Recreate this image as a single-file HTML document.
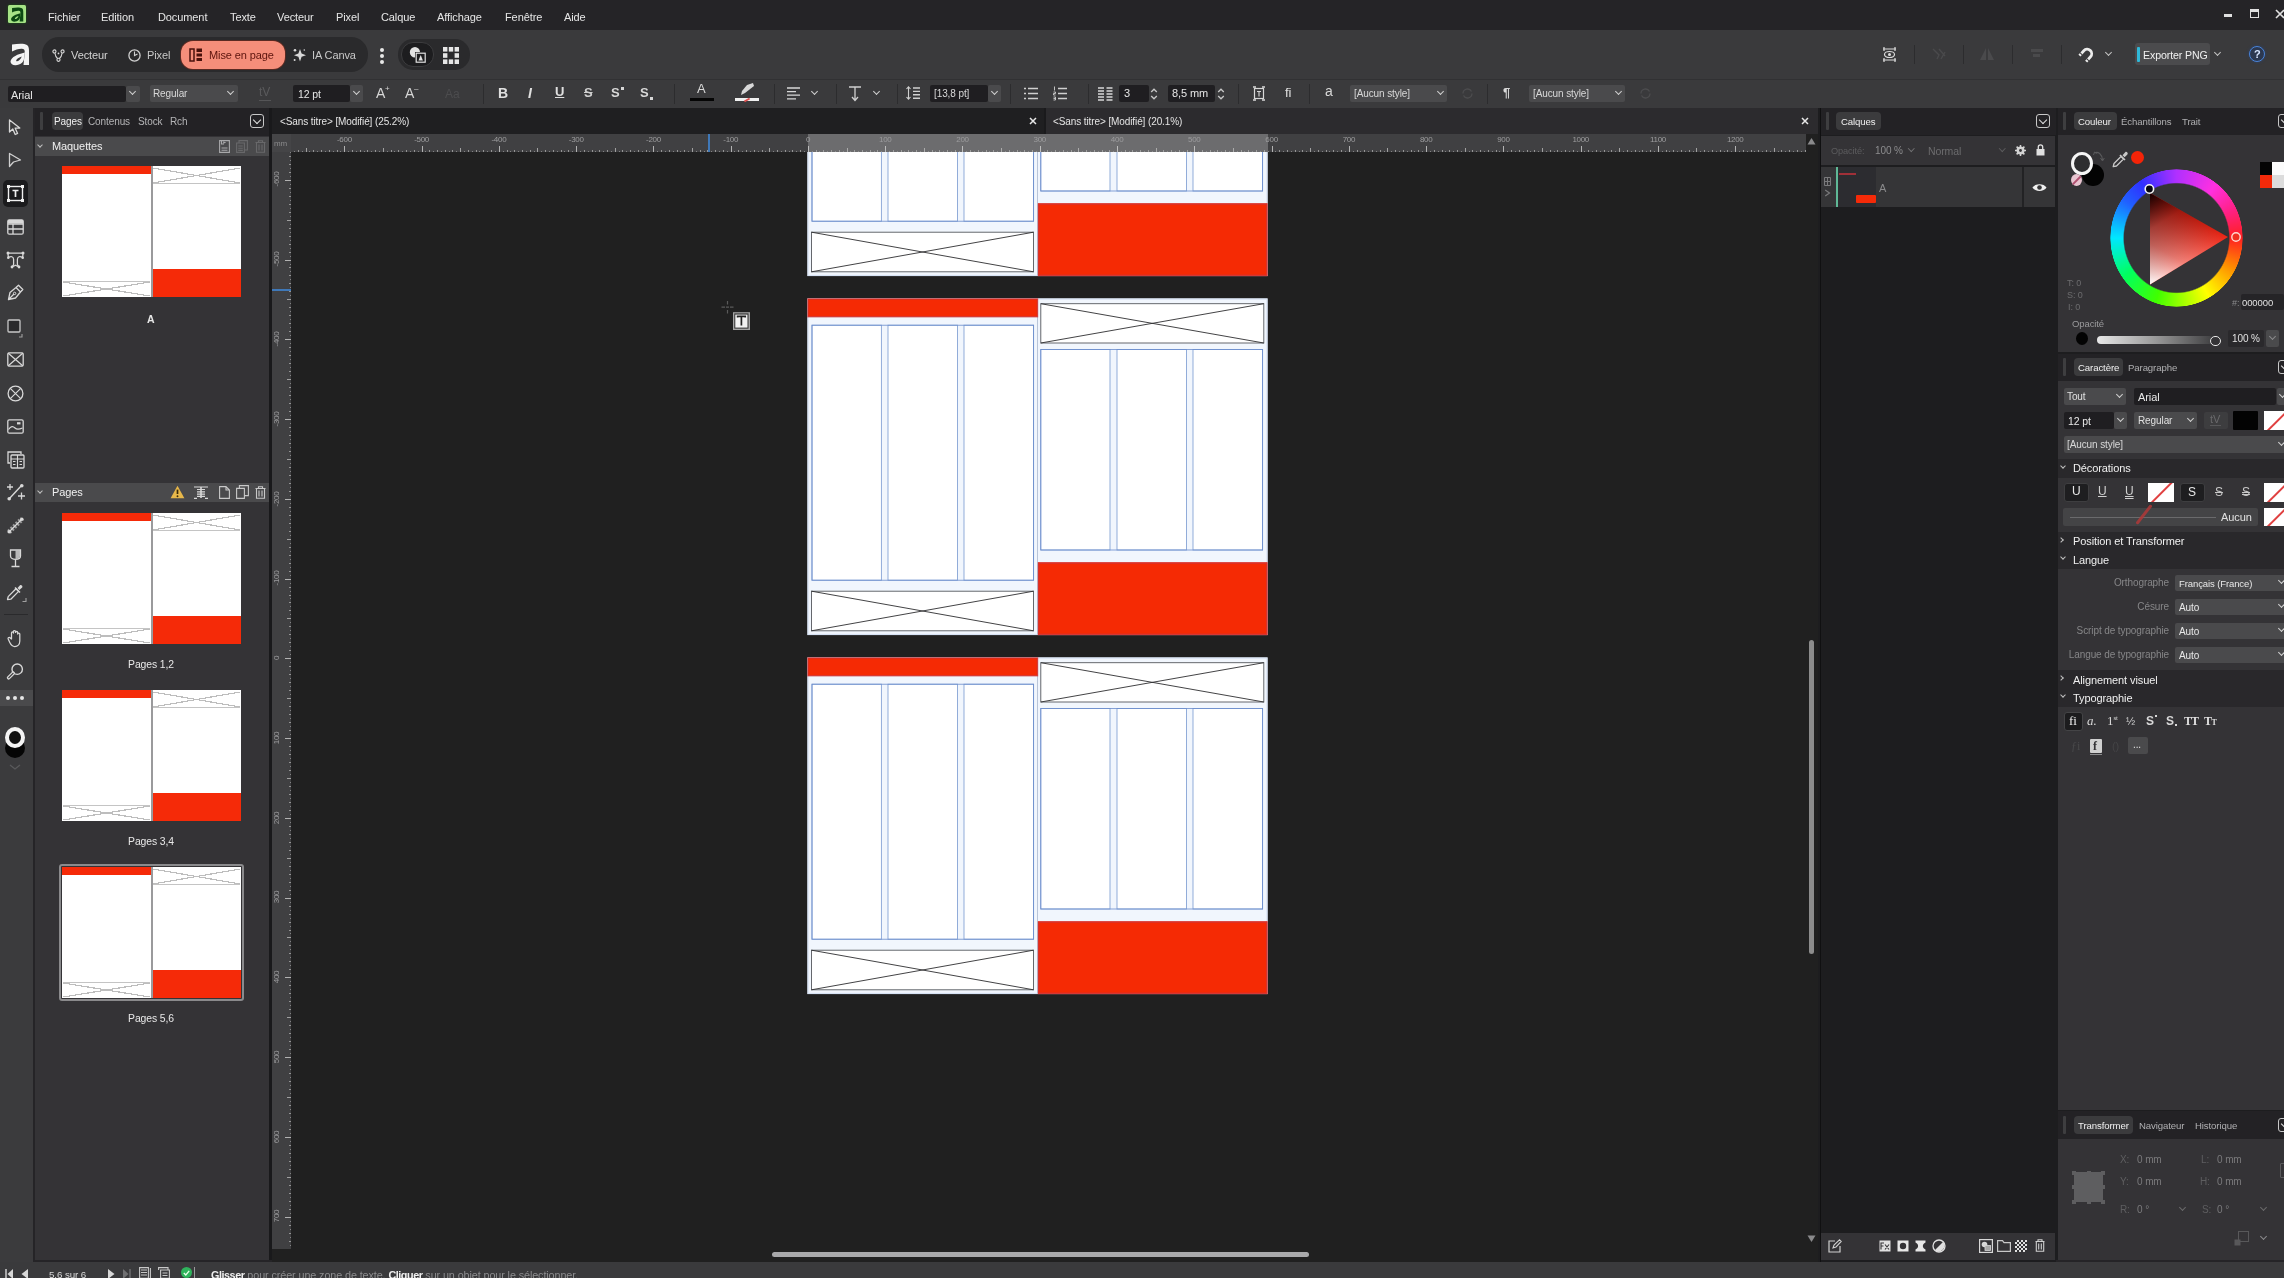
<!DOCTYPE html>
<html lang="fr">
<head>
<meta charset="utf-8">
<title>Sans titre</title>
<style>
*{box-sizing:border-box;margin:0;padding:0}
html,body{width:2284px;height:1278px;overflow:hidden;background:#3a3a3c}
body{opacity:.999;font-family:"Liberation Sans",sans-serif;font-size:11px;color:#e6e6e6;position:relative;letter-spacing:-0.1px}
.a{position:absolute}
.t{position:absolute;white-space:nowrap;line-height:14px;height:14px}
.dim{color:#8a8a8c}
.b{font-weight:bold}
svg{position:absolute;overflow:visible}
.fld{position:absolute;background:#1f1e21;border-radius:2px}
.dd{position:absolute;background:#4a4a4c;border-radius:2px}
.sep{position:absolute;width:1px;background:#2c2c2e}
.pill{position:absolute;background:#3b3b3d;border-radius:4px}
.hdr{position:absolute;background:#232225}
.sec{position:absolute;background:#4a4a4c}
.body{position:absolute;background:#343336}
.chev{position:absolute;width:5px;height:5px;border-right:1.4px solid #d0d0d0;border-bottom:1.4px solid #d0d0d0;transform:rotate(45deg)}
.chevr{position:absolute;width:5px;height:5px;border-right:1.4px solid #d0d0d0;border-bottom:1.4px solid #d0d0d0;transform:rotate(-45deg)}
.cbox{position:absolute;width:14px;height:14px;border:1.3px solid #c8c8c8;border-radius:3px}
.cbox:after{content:"";position:absolute;left:3px;top:1.5px;width:5px;height:5px;border-right:1.5px solid #e0e0e0;border-bottom:1.5px solid #e0e0e0;transform:rotate(45deg)}
.grip{position:absolute;width:3px;height:18px;background:#3e3e40;border-radius:1px}
.sw{position:absolute;background:#fff;overflow:hidden}
.sw:after{content:"";position:absolute;left:-20%;top:46%;width:140%;height:1.5px;background:#e04040;transform:rotate(-45deg)}
.thumb{position:absolute;width:179px;height:131px;background:#fff}
.thumb i{position:absolute;display:block}
.thumb .r1{left:0;top:0;width:89px;height:8px;background:#f52a08}
.thumb .r2{left:90px;top:103px;width:89px;height:28px;background:#f52a08}
.thumb .sp{left:89px;top:0;width:1.5px;height:131px;background:#9a9a9c}
.thumb .p1{left:1px;top:115px;width:87px;height:15px;border-top:1px solid #c4c4c4;background:linear-gradient(to top right,transparent calc(50% - .6px),#bdbdbd calc(50% - .6px),#bdbdbd calc(50% + .6px),transparent calc(50% + .6px)),linear-gradient(to bottom right,transparent calc(50% - .6px),#bdbdbd calc(50% - .6px),#bdbdbd calc(50% + .6px),transparent calc(50% + .6px))}
.thumb .p2{left:91px;top:2px;width:87px;height:16px;border-bottom:1px solid #c4c4c4;background:linear-gradient(to top right,transparent calc(50% - .6px),#bdbdbd calc(50% - .6px),#bdbdbd calc(50% + .6px),transparent calc(50% + .6px)),linear-gradient(to bottom right,transparent calc(50% - .6px),#bdbdbd calc(50% - .6px),#bdbdbd calc(50% + .6px),transparent calc(50% + .6px))}
</style>
</head>
<body>
<!-- ===== MENU BAR ===== -->
<div class="a" id="menubar" style="left:0;top:0;width:2284px;height:30px;background:#252427"></div>
<!-- ===== TOOLBAR ===== -->
<div class="a" id="toolbar" style="left:0;top:30px;width:2284px;height:49px;background:#3a3a3c"></div>
<!-- ===== CONTEXT BAR ===== -->
<div class="a" id="ctxbar" style="left:0;top:79px;width:2284px;height:29px;background:#3a3a3c"></div>
<!-- menu -->
<div class="a" style="left:8px;top:5px;width:18px;height:18px;background:#a6e386;border-radius:1.5px;box-shadow:0 0 3px #1c5a14"></div>
<svg style="left:10px;top:6.5px" width="14" height="15.5" viewBox="0 0 21 23.5"><path d="M3 1.5 C9 0.5 15 0 18 2 C20 3.5 20 6 20 9 L20 22 L14.5 22 L15.5 12 C16 8 16 6 13 5.8 C10 5.6 6 7 3 8.5 Z" fill="#0c4a12"/><path d="M15.8 9.5 C9 11 2 14 1.5 18.5 C1.5 22 6 23 10 21.5 C12.5 20.5 14 19 14.8 17 Z M12.8 13.5 C9.5 14.5 7 16.5 7.2 18 C8 19 11.5 17.5 12.8 13.5 Z" fill="#0c4a12" fill-rule="evenodd"/></svg>
<div class="t" style="left:48px;top:10px">Fichier</div>
<div class="t" style="left:101px;top:10px">Edition</div>
<div class="t" style="left:158px;top:10px">Document</div>
<div class="t" style="left:230px;top:10px">Texte</div>
<div class="t" style="left:277px;top:10px">Vecteur</div>
<div class="t" style="left:336px;top:10px">Pixel</div>
<div class="t" style="left:381px;top:10px">Calque</div>
<div class="t" style="left:437px;top:10px">Affichage</div>
<div class="t" style="left:505px;top:10px">Fenêtre</div>
<div class="t" style="left:564px;top:10px">Aide</div>
<!-- window controls -->
<div class="a" style="left:2224px;top:14px;width:8px;height:3px;background:#e0e0e0"></div>
<div class="a" style="left:2250px;top:9px;width:9px;height:9px;border:1.5px solid #e0e0e0;border-top-width:3px"></div>
<svg style="left:2275px;top:9px" width="10" height="10"><path d="M1 1 L9 9 M9 1 L1 9" stroke="#e0e0e0" stroke-width="1.6" fill="none"/></svg>

<!-- toolbar -->
<svg style="left:9px;top:43px" width="21" height="23.5" viewBox="0 0 21 23.5"><path d="M3 1.5 C9 0.5 15 0 18 2 C20 3.5 20 6 20 9 L20 22 L14.5 22 L15.5 12 C16 8 16 6 13 5.8 C10 5.6 6 7 3 8.5 Z" fill="#f4f4f4"/><path d="M15.8 9.5 C9 11 2 14 1.5 18.5 C1.5 22 6 23 10 21.5 C12.5 20.5 14 19 14.8 17 Z M12.8 13.5 C9.5 14.5 7 16.5 7.2 18 C8 19 11.5 17.5 12.8 13.5 Z" fill="#f4f4f4" fill-rule="evenodd"/></svg>
<div class="a" style="left:42px;top:37px;width:326px;height:35px;background:#2a2a2c;border-radius:17px"></div>
<!-- Vecteur -->
<svg style="left:52px;top:49px" width="13" height="13.8" viewBox="0 0 15 16"><g fill="none" stroke="#d8d8d8" stroke-width="1.3"><circle cx="2.8" cy="2.8" r="1.8"/><circle cx="12.2" cy="2.8" r="1.8"/><circle cx="7.5" cy="12.6" r="1.8"/><path d="M3.3 4.6 C3.8 8 5 10 6.5 11 M11.7 4.6 C11.2 8 10 10 8.5 11"/></g><circle cx="7.5" cy="5.2" r="1" fill="#d8d8d8"/></svg>
<div class="t" style="left:71px;top:48px;color:#d4d4d4">Vecteur</div>
<!-- Pixel -->
<svg style="left:127px;top:48px" width="15" height="15" viewBox="0 0 15 15"><circle cx="7.5" cy="7.5" r="5.6" fill="none" stroke="#d0d0d0" stroke-width="1.3"/><path d="M7.5 3.5 L7.5 7.5 L10.5 6" fill="none" stroke="#d0d0d0" stroke-width="1.1"/></svg>
<div class="t" style="left:147px;top:48px;color:#c8c8c8">Pixel</div>
<!-- Mise en page (active) -->
<div class="a" style="left:181px;top:41px;width:104px;height:28px;background:#f58e7a;border-radius:12px;box-shadow:0 0 0 1px #5a2a22"></div>
<svg style="left:189px;top:48px" width="14" height="14" viewBox="0 0 14 14"><rect x="1" y="1" width="4" height="12" fill="none" stroke="#4a120c" stroke-width="1.5"/><rect x="7.5" y="0.5" width="5.5" height="3.5" fill="#4a120c"/><rect x="7.5" y="5.5" width="5.5" height="3" fill="#4a120c"/><rect x="7.5" y="10" width="5.5" height="3" fill="#4a120c"/></svg>
<div class="t" style="left:209px;top:48px;color:#5c140d">Mise en page</div>
<!-- IA Canva -->
<svg style="left:292px;top:47px" width="15" height="16" viewBox="0 0 15 16"><path d="M8 2 L9.6 6.6 L14 8.2 L9.6 9.8 L8 14.4 L6.4 9.8 L2 8.2 L6.4 6.6 Z" fill="#d8d8d8"/><circle cx="3" cy="3.2" r="1.3" fill="#d8d8d8"/><circle cx="2.6" cy="13" r="1" fill="#d8d8d8"/><circle cx="12.3" cy="3" r="0.8" fill="#d8d8d8"/></svg>
<div class="t" style="left:312px;top:48px;color:#c8c8c8">IA Canva</div>
<!-- dots -->
<div class="a" style="left:380px;top:48px;width:4px;height:4px;border-radius:50%;background:#e8e8e8"></div>
<div class="a" style="left:380px;top:54px;width:4px;height:4px;border-radius:50%;background:#e8e8e8"></div>
<div class="a" style="left:380px;top:60px;width:4px;height:4px;border-radius:50%;background:#e8e8e8"></div>
<!-- second pill -->
<div class="a" style="left:398px;top:39px;width:72px;height:31px;background:#2a2a2c;border-radius:15px"></div>
<div class="a" style="left:401px;top:42px;width:33px;height:25px;background:#1d1d1f;border-radius:12px;border:1px solid #3c3c3e"></div>
<svg style="left:409px;top:46px" width="18" height="18" viewBox="0 0 18 18"><path d="M6 1 A5.2 5.2 0 1 0 6 11.4 L6 6 L11 6 A5.2 5.2 0 0 0 6 1Z" fill="#e2e2e2"/><rect x="7.2" y="7.2" width="9" height="9" fill="#1d1d1f" stroke="#e2e2e2" stroke-width="1.2"/><path d="M9.5 14.5 L11.7 9 L13.9 14.5 Z" fill="#e2e2e2"/></svg>
<svg style="left:443px;top:47px" width="16" height="17" viewBox="0 0 16 17"><g fill="#e6e6e6"><rect x="0" y="0" width="4.4" height="4.6"/><rect x="5.8" y="0" width="4.4" height="4.6"/><rect x="11.6" y="0" width="4.4" height="4.6"/><rect x="0" y="6.2" width="4.4" height="4.6"/><rect x="11.6" y="6.2" width="4.4" height="4.6"/><rect x="0" y="12.4" width="4.4" height="4.6"/><rect x="5.8" y="12.4" width="4.4" height="4.6"/><rect x="11.6" y="12.4" width="4.4" height="4.6"/></g></svg>
<!-- right side toolbar -->
<svg style="left:1881px;top:46px" width="17" height="17" viewBox="0 0 17 17"><g fill="none" stroke="#dcdcdc" stroke-width="1.2"><path d="M2 3 H15 M2 14 H15 M3 1 V5 M14 1 V5 M3 12 V16 M14 12 V16"/><ellipse cx="8.5" cy="8.5" rx="5" ry="3"/></g><circle cx="8.5" cy="8.5" r="1.5" fill="#dcdcdc"/></svg>
<div class="sep" style="left:1914px;top:45px;height:19px;background:#2c2c2e"></div>
<svg style="left:1931px;top:47px" width="16" height="14" viewBox="0 0 16 14"><path d="M2 2 L8 8 L6 12 M8 2 L14 9 M10 12 L14 5" stroke="#4a4a4c" stroke-width="1.4" fill="none"/></svg>
<div class="sep" style="left:1963px;top:45px;height:19px;background:#2c2c2e"></div>
<svg style="left:1979px;top:47px" width="16" height="14" viewBox="0 0 16 14"><path d="M7 1 L7 13 L1 13 Z M9 1 L9 13 L15 13 Z" fill="#4a4a4c"/></svg>
<div class="sep" style="left:2012px;top:45px;height:19px;background:#2c2c2e"></div>
<svg style="left:2030px;top:49px" width="14" height="10" viewBox="0 0 14 10"><rect x="1" y="0" width="12" height="3" fill="#4a4a4c"/><rect x="3" y="5" width="7" height="3" fill="#4a4a4c"/></svg>
<div class="sep" style="left:2061px;top:45px;height:19px;background:#2c2c2e"></div>
<svg style="left:2078px;top:46px" width="17" height="17" viewBox="0 0 17 17"><g transform="rotate(42 8.5 8.5)"><path d="M4 14 V7.5 A4.5 4.5 0 0 1 13 7.5 V14" fill="none" stroke="#ececec" stroke-width="2.8"/><path d="M2.4 11.6 H5.6 M11.4 11.6 H14.6" stroke="#3a3a3c" stroke-width="1"/></g></svg>
<div class="chev" style="left:2106px;top:50px;border-color:#c4c4c4"></div>
<div class="a" style="left:2135px;top:43px;width:75px;height:22px;background:#4b4b4d;border-radius:3px"></div>
<div class="a" style="left:2137px;top:47px;width:3px;height:15px;background:#2fb8d8;border-radius:1px"></div>
<div class="t" style="left:2143px;top:48px;font-size:10.6px;color:#f0f0f0">Exporter PNG</div>
<div class="chev" style="left:2214.5px;top:50px;border-color:#c4c4c4"></div>
<div class="a" style="left:2249px;top:46px;width:16px;height:16px;border:1.6px solid #4a84d8;border-radius:50%;background:#2c3850;box-shadow:0 0 3px #2c4470"></div>
<div class="t b" style="left:2254px;top:47px;font-size:11px;color:#d8e6ff">?</div>

<!-- context bar -->
<div class="a" style="left:0;top:79px;width:2284px;height:1px;background:#313133"></div>
<div class="fld" style="left:8px;top:86px;width:118px;height:16px"></div>
<div class="t" style="left:11px;top:88px">Arial</div>
<div class="dd" style="left:126px;top:86px;width:14px;height:16px"></div><div class="chev" style="left:130px;top:89px"></div>
<div class="dd" style="left:150px;top:85px;width:88px;height:17px"></div>
<div class="t" style="left:153px;top:87px;font-size:10px;color:#d8d8d8">Regular</div><div class="chev" style="left:228px;top:89px"></div>
<div class="t dim" style="left:259px;top:85px;color:#5a5a5c;font-size:12px">tV</div>
<div class="a" style="left:259px;top:100px;width:12px;height:1px;background:#555557"></div>
<div class="fld" style="left:293px;top:85px;width:57px;height:17px"></div>
<div class="t" style="left:298px;top:87px;font-size:10.5px">12 pt</div>
<div class="dd" style="left:350px;top:85px;width:13px;height:17px"></div><div class="chev" style="left:353.5px;top:89px"></div>
<div class="t" style="left:376px;top:86px;font-size:14px;color:#d6d6d6">A</div><div class="t" style="left:385px;top:82px;font-size:8px;color:#d6d6d6">+</div>
<div class="t" style="left:405px;top:86px;font-size:14px;color:#d6d6d6">A</div><div class="t" style="left:414px;top:82px;font-size:8px;color:#d6d6d6">–</div>
<div class="t" style="left:445px;top:87px;font-size:12px;color:#4c4c4e">Aa</div>
<div class="sep" style="left:483px;top:84px;height:20px"></div>
<div class="t b" style="left:498px;top:86px;font-size:14px;color:#e0e0e0">B</div>
<div class="t b" style="left:528px;top:86px;font-size:14px;color:#e0e0e0;font-style:italic">I</div>
<div class="t b" style="left:555px;top:85px;font-size:13px;color:#e0e0e0;text-decoration:underline">U</div>
<div class="t b" style="left:584px;top:86px;font-size:13px;color:#d0d0d0;text-decoration:line-through">S</div>
<div class="t b" style="left:611px;top:86px;font-size:13px;color:#d8d8d8">S</div><div class="a" style="left:621px;top:87px;width:2.5px;height:2.5px;background:#d8d8d8"></div>
<div class="t b" style="left:640px;top:86px;font-size:13px;color:#d8d8d8">S</div><div class="a" style="left:650px;top:97px;width:2.5px;height:2.5px;background:#d8d8d8"></div>
<div class="sep" style="left:674px;top:84px;height:20px"></div>
<div class="t" style="left:697px;top:82px;font-size:13px;color:#d8d8d8">A</div>
<div class="a" style="left:690px;top:98px;width:24px;height:3px;background:#050505"></div>
<svg style="left:738px;top:83px" width="18" height="13" viewBox="0 0 18 13"><path d="M9 2 L15 0 L16 3 L7 10 L3 12 L4 8 Z" fill="#d8d8d8"/></svg>
<div class="a" style="left:735px;top:98px;width:24px;height:3px;background:#f0f0f0"></div>
<div class="a" style="left:744px;top:98.5px;width:6px;height:2px;background:#e05050;transform:rotate(-30deg)"></div>
<div class="sep" style="left:774px;top:84px;height:20px"></div>
<!-- align -->
<svg style="left:787px;top:87px" width="15" height="13" viewBox="0 0 15 13"><path d="M0 1 H13 M0 4.6 H9 M0 8.2 H13 M0 11.8 H9" stroke="#d8d8d8" stroke-width="1.3"/></svg>
<div class="chev" style="left:812px;top:89px"></div>
<div class="sep" style="left:836px;top:84px;height:20px"></div>
<svg style="left:848px;top:86px" width="14" height="16" viewBox="0 0 14 16"><path d="M1 1 H13 M7 1 V14 M4 11 L7 14.5 L10 11" stroke="#d0d0d0" stroke-width="1.3" fill="none"/></svg>
<div class="chev" style="left:874px;top:89px"></div>
<div class="sep" style="left:897px;top:84px;height:20px"></div>
<svg style="left:906px;top:86px" width="14" height="14" viewBox="0 0 14 14"><path d="M2.5 1 V13 M0.5 3 L2.5 0.8 L4.5 3 M0.5 11 L2.5 13.2 L4.5 11" stroke="#d0d0d0" stroke-width="1.1" fill="none"/><path d="M7 2 H14 M7 5.4 H14 M7 8.8 H14 M7 12.2 H14" stroke="#d0d0d0" stroke-width="1.4"/></svg>
<div class="fld" style="left:930px;top:85px;width:58px;height:17px"></div>
<div class="t" style="left:934px;top:87px;font-size:10px;color:#d8d8d8">[13,8 pt]</div>
<div class="dd" style="left:988px;top:85px;width:13px;height:17px"></div><div class="chev" style="left:991.5px;top:89px"></div>
<div class="sep" style="left:1010px;top:84px;height:20px"></div>
<svg style="left:1024px;top:87px" width="14" height="13" viewBox="0 0 14 13"><path d="M4 1.5 H14 M4 6.5 H14 M4 11.5 H14" stroke="#d0d0d0" stroke-width="1.3"/><path d="M0 1.5 H2 M0 6.5 H2 M0 11.5 H2" stroke="#d0d0d0" stroke-width="1.6"/></svg>
<svg style="left:1053px;top:86px" width="14" height="15" viewBox="0 0 14 15"><path d="M5 2.5 H14 M5 7.5 H14 M5 12.5 H14" stroke="#d0d0d0" stroke-width="1.3"/><path d="M1.5 0.5 V4.5 M0.5 6 H2.5 V7.5 H0.5 V9 H2.5 M0.5 11 H2.5 V14 H0.5 M0.5 12.5 H2.5" stroke="#d0d0d0" stroke-width="0.9" fill="none"/></svg>
<div class="sep" style="left:1088px;top:84px;height:20px"></div>
<svg style="left:1098px;top:87px" width="15" height="14" viewBox="0 0 15 14"><path d="M0 1 H6 M0 4 H6 M0 7 H6 M0 10 H6 M0 13 H6 M8.5 1 H14.5 M8.5 4 H14.5 M8.5 7 H14.5 M8.5 10 H14.5 M8.5 13 H14.5" stroke="#d8d8d8" stroke-width="1.3"/></svg>
<div class="fld" style="left:1119px;top:85px;width:30px;height:17px"></div>
<div class="t" style="left:1124px;top:86px">3</div>
<svg style="left:1150px;top:87px" width="8" height="14" viewBox="0 0 8 14"><path d="M1.2 5 L4 2.2 L6.8 5 M1.2 9 L4 11.8 L6.8 9" stroke="#c8c8c8" stroke-width="1.3" fill="none"/></svg>
<div class="fld" style="left:1168px;top:85px;width:47px;height:17px"></div>
<div class="t" style="left:1172px;top:86px">8,5 mm</div>
<svg style="left:1217px;top:87px" width="8" height="14" viewBox="0 0 8 14"><path d="M1.2 5 L4 2.2 L6.8 5 M1.2 9 L4 11.8 L6.8 9" stroke="#c8c8c8" stroke-width="1.3" fill="none"/></svg>
<div class="sep" style="left:1238px;top:84px;height:20px"></div>
<svg style="left:1252px;top:86px" width="14" height="15" viewBox="0 0 14 15"><rect x="2.5" y="2.5" width="9" height="10" fill="none" stroke="#d8d8d8" stroke-width="1.2"/><path d="M1 1 H4 M10 1 H13 M1 14 H4 M10 14 H13" stroke="#d8d8d8" stroke-width="1.4"/><path d="M5 5.5 H9 M7 5.5 V10.5" stroke="#d8d8d8" stroke-width="1.1"/></svg>
<div class="t" style="left:1285px;top:86px;font-size:13px;color:#e0e0e0">fi</div>
<div class="sep" style="left:1309px;top:84px;height:20px"></div>
<div class="t" style="left:1325px;top:84px;font-size:14px;color:#d8d8d8">a</div>
<div class="dd" style="left:1350px;top:85px;width:97px;height:17px"></div>
<div class="t" style="left:1354px;top:87px;font-size:10px;color:#d8d8d8">[Aucun style]</div><div class="chev" style="left:1438px;top:89px"></div>
<svg style="left:1461px;top:87px" width="13" height="13" viewBox="0 0 13 13"><path d="M2 6.5 A4.5 4.5 0 0 1 10.5 4.5 M11 6.5 A4.5 4.5 0 0 1 2.5 8.5" stroke="#4c4c4e" stroke-width="1.3" fill="none"/></svg>
<div class="sep" style="left:1487px;top:84px;height:20px"></div>
<div class="t b" style="left:1503px;top:86px;font-size:13px;color:#d8d8d8">¶</div>
<div class="dd" style="left:1529px;top:85px;width:96px;height:17px"></div>
<div class="t" style="left:1533px;top:87px;font-size:10px;color:#d8d8d8">[Aucun style]</div><div class="chev" style="left:1616px;top:89px"></div>
<svg style="left:1639px;top:87px" width="13" height="13" viewBox="0 0 13 13"><path d="M2 6.5 A4.5 4.5 0 0 1 10.5 4.5 M11 6.5 A4.5 4.5 0 0 1 2.5 8.5" stroke="#4c4c4e" stroke-width="1.3" fill="none"/></svg>

<!-- ===== LEFT TOOL STRIP ===== -->
<div class="a" style="left:0;top:108px;width:33px;height:1154px;background:#3b3b3d"></div>
<div class="a" style="left:33px;top:108px;width:2px;height:1154px;background:#252427"></div>
<!-- move -->
<svg style="left:8px;top:119px" width="14" height="17" viewBox="0 0 14 17"><path d="M1.5 1 L1.5 13 L4.8 10 L7.2 15.5 L9.6 14.4 L7.2 9.2 L11.8 9 Z" fill="none" stroke="#d8d8d8" stroke-width="1.3" stroke-linejoin="round"/></svg>
<!-- node -->
<svg style="left:8px;top:152px" width="14" height="16" viewBox="0 0 14 16"><path d="M1.5 1.5 L12.5 8 L5.5 10 L1.5 14.5 Z" fill="none" stroke="#d0d0d0" stroke-width="1.3" stroke-linejoin="round"/></svg>
<!-- text frame (active) -->
<div class="a" style="left:3px;top:180px;width:25px;height:27px;background:#1b1b1d;border-radius:5px"></div>
<svg style="left:7px;top:185px" width="17" height="17" viewBox="0 0 17 17"><rect x="1.5" y="1.5" width="14" height="14" fill="none" stroke="#f0f0f0" stroke-width="1.4"/><g fill="#f0f0f0"><rect x="0" y="0" width="3" height="3"/><rect x="14" y="0" width="3" height="3"/><rect x="0" y="14" width="3" height="3"/><rect x="14" y="14" width="3" height="3"/></g><path d="M5.5 5.5 H11.5 M8.5 5.5 V12" stroke="#f0f0f0" stroke-width="1.7"/></svg>
<!-- table -->
<svg style="left:7px;top:219px" width="17" height="16" viewBox="0 0 17 16"><rect x="0.8" y="0.8" width="15.4" height="14.4" rx="1.5" fill="none" stroke="#d8d8d8" stroke-width="1.3"/><path d="M0.8 5 H16.2 M0.8 10 H16.2 M6 5 V15" stroke="#d8d8d8" stroke-width="1.3"/><rect x="1" y="1" width="15" height="3.5" fill="#d8d8d8"/></svg>
<!-- artistic text -->
<svg style="left:6px;top:251px" width="19" height="18" viewBox="0 0 19 18"><g fill="none" stroke="#d8d8d8" stroke-width="1.25" stroke-linejoin="round"><path d="M2 2 H17 M2 2 L2.3 6.5 M17 2 L16.7 6.5 M2.3 6.5 C5 5 7.6 5.4 7.6 8.5 V13.5 L6 16 M16.7 6.5 C14 5 11.4 5.4 11.4 8.5 V13.5 L13 16 M6 16 L9.5 14.2 L13 16"/></g><g fill="#d8d8d8"><circle cx="2" cy="2" r="1.5"/><circle cx="17" cy="2" r="1.5"/><circle cx="2.3" cy="6.7" r="1.3"/><circle cx="16.7" cy="6.7" r="1.3"/><circle cx="6" cy="16" r="1.4"/><circle cx="13" cy="16" r="1.4"/></g></svg>
<!-- pen -->
<svg style="left:7px;top:284px" width="17" height="17" viewBox="0 0 17 17"><path d="M1.5 15.5 L3 8.5 L9 3.5 L13.5 8 L8.5 14 Z M9 3.5 L11.5 1.2 L15.8 5.5 L13.5 8 M1.5 15.5 L7 10" fill="none" stroke="#d8d8d8" stroke-width="1.3" stroke-linejoin="round"/><circle cx="7.6" cy="9.4" r="1.2" fill="none" stroke="#d8d8d8" stroke-width="1"/></svg>
<!-- rectangle -->
<svg style="left:7px;top:319px" width="21" height="21" viewBox="0 0 21 21"><rect x="1" y="1" width="12" height="12" rx="1" fill="#2a2a2c" stroke="#c8c8c8" stroke-width="1.3"/><path d="M15 15 V18 H12" stroke="#a0a0a0" stroke-width="1.1" fill="none"/></svg>
<!-- picture frame rect -->
<svg style="left:7px;top:352px" width="17" height="15" viewBox="0 0 17 15"><rect x="0.8" y="0.8" width="15.4" height="13.4" rx="1.5" fill="none" stroke="#d8d8d8" stroke-width="1.3"/><path d="M1 1 L16 14 M16 1 L1 14" stroke="#d8d8d8" stroke-width="1.2"/></svg>
<!-- picture frame ellipse -->
<svg style="left:7px;top:385px" width="17" height="17" viewBox="0 0 17 17"><circle cx="8.5" cy="8.5" r="7.4" fill="none" stroke="#d8d8d8" stroke-width="1.3"/><path d="M3.3 3.3 L13.7 13.7 M13.7 3.3 L3.3 13.7" stroke="#d8d8d8" stroke-width="1.2"/></svg>
<!-- place image -->
<svg style="left:7px;top:419px" width="17" height="15" viewBox="0 0 17 15"><rect x="0.8" y="0.8" width="15.4" height="13.4" rx="1.5" fill="none" stroke="#d8d8d8" stroke-width="1.3"/><path d="M1.5 10.5 C4 7 6 7 8 9 C10 11 12 10.5 15.5 9" stroke="#d8d8d8" stroke-width="1.2" fill="none"/><rect x="10" y="3.2" width="3.5" height="2.2" fill="#d8d8d8"/></svg>
<!-- data merge -->
<svg style="left:7px;top:451px" width="18" height="18" viewBox="0 0 18 18"><path d="M3 12 H1 V1 H14 V3" stroke="#d8d8d8" stroke-width="1.3" fill="none"/><rect x="4" y="4" width="13" height="13" rx="1" fill="none" stroke="#d8d8d8" stroke-width="1.3"/><path d="M4 8 H17 M10.5 4 V17 M12.5 10.5 H15 M12.5 13.5 H15 M6 10.5 H8.5 M6 13.5 H8.5" stroke="#d8d8d8" stroke-width="1.1"/></svg>
<!-- crop/vector -->
<svg style="left:6px;top:483px" width="19" height="19" viewBox="0 0 19 19"><path d="M3 16 L16 2" stroke="#d8d8d8" stroke-width="1.4"/><circle cx="3.2" cy="15.8" r="1.8" fill="#d8d8d8"/><circle cx="15.8" cy="2.8" r="1.8" fill="#d8d8d8"/><path d="M1 4 H7 M4 1 V7 M12 13 H19 M15.5 9.5 V16.5" stroke="#d8d8d8" stroke-width="1.3"/></svg>
<!-- transparency -->
<svg style="left:6px;top:516px" width="19" height="19" viewBox="0 0 19 19"><path d="M3 16 L16 3" stroke="#bcbcbc" stroke-width="5" stroke-dasharray="2 1.6" opacity=".75"/><path d="M3 16 L16 3" stroke="#d8d8d8" stroke-width="1.3"/><circle cx="3.2" cy="15.8" r="1.8" fill="#d8d8d8"/><circle cx="15.8" cy="3.2" r="1.8" fill="#d8d8d8"/></svg>
<!-- glass -->
<svg style="left:8px;top:549px" width="15" height="19" viewBox="0 0 15 19"><path d="M2.5 1 H12.5 V7 C12.5 11.5 2.5 11.5 2.5 7 Z M7.5 10.5 V17 M3.5 17.5 H11.5" fill="none" stroke="#d8d8d8" stroke-width="1.3"/><path d="M7.5 1.5 H12 V7 C12 9 9.5 10 7.5 10 Z" fill="#d8d8d8" opacity=".8"/></svg>
<!-- eyedropper -->
<svg style="left:6px;top:583px" width="22" height="22" viewBox="0 0 22 22"><path d="M1.5 16.5 L2.2 13.6 L10 5.8 L12.6 8.4 L4.8 16.2 Z" fill="none" stroke="#d8d8d8" stroke-width="1.3" stroke-linejoin="round"/><path d="M9 4.5 L14 9.5" stroke="#d8d8d8" stroke-width="1.6"/><path d="M11.5 5 L14 2.2 C15 1.2 17.2 3.2 16.2 4.4 L13.4 7 Z" fill="#d8d8d8"/><path d="M20 15 V18.5 H16.5" stroke="#a0a0a0" stroke-width="1.1" fill="none"/></svg>
<div class="a" style="left:4px;top:614px;width:24px;height:1px;background:#2a2a2c"></div>
<!-- hand -->
<svg style="left:7px;top:629px" width="17" height="19" viewBox="0 0 17 19"><path d="M4.5 10 V4 C4.5 2.6 6.5 2.6 6.5 4 V2.6 C6.5 1.2 8.6 1.2 8.6 2.6 V3.4 C8.6 2 10.7 2 10.7 3.4 V5 C10.7 3.8 12.8 3.8 12.8 5 V12 C12.8 15.5 10.5 17.5 7.8 17.5 C5.5 17.5 4 16 2.8 13.5 L1.2 10 C0.6 8.6 2.6 7.8 3.4 9.2 Z" fill="none" stroke="#d8d8d8" stroke-width="1.25" stroke-linejoin="round"/></svg>
<!-- zoom -->
<svg style="left:6px;top:662px" width="19" height="19" viewBox="0 0 19 19"><circle cx="11.2" cy="7.2" r="5.2" fill="none" stroke="#d8d8d8" stroke-width="1.4"/><path d="M7.2 11.2 L2.6 15.8" stroke="#d8d8d8" stroke-width="3.6" stroke-linecap="round"/><path d="M7 11.4 L2.8 15.6" stroke="#3b3b3d" stroke-width="1.3" stroke-linecap="round"/></svg>
<!-- dots row -->
<div class="a" style="left:0;top:690px;width:33px;height:16px;background:#4a4a4c"></div>
<div class="a" style="left:6px;top:696px;width:4px;height:4px;border-radius:50%;background:#e6e6e6"></div>
<div class="a" style="left:13px;top:696px;width:4px;height:4px;border-radius:50%;background:#e6e6e6"></div>
<div class="a" style="left:20px;top:696px;width:4px;height:4px;border-radius:50%;background:#e6e6e6"></div>
<!-- colour rings -->
<div class="a" style="left:5px;top:738px;width:20px;height:20px;border-radius:50%;background:#050505"></div>
<div class="a" style="left:5px;top:727px;width:20px;height:21px;border-radius:50%;border:4px solid #f4f4f4;background:#111"></div>
<svg style="left:9px;top:764px" width="12" height="6" viewBox="0 0 12 6"><path d="M1 1 L6 5 L11 1" stroke="#5a5a5c" stroke-width="1.3" fill="none"/></svg>

<!-- ===== PAGES PANEL ===== -->
<div class="hdr" style="left:35px;top:108px;width:235px;height:28px"></div>
<div class="body" style="left:35px;top:136px;width:234px;height:1125px"></div>
<div class="a" style="left:269px;top:108px;width:3px;height:1154px;background:#19191b"></div>
<div class="a" style="left:35px;top:1260px;width:237px;height:2px;background:#252427"></div>
<div class="grip" style="left:40px;top:112px"></div>
<div class="pill" style="left:52px;top:112px;width:31px;height:18px"></div>
<div class="t" style="left:54px;top:115px;font-size:10px;color:#f0f0f0">Pages</div>
<div class="t" style="left:88px;top:115px;font-size:10px;color:#b4b4b6">Contenus</div>
<div class="t" style="left:138px;top:115px;font-size:10px;color:#b4b4b6">Stock</div>
<div class="t" style="left:170px;top:115px;font-size:10px;color:#b4b4b6">Rch</div>
<div class="cbox" style="left:250px;top:114px"></div>
<!-- Maquettes header -->
<div class="sec" style="left:35px;top:137px;width:234px;height:19px"></div>
<div class="chev" style="left:37.5px;top:142.5px;width:4px;height:4px;border-color:#c0c0c0"></div>
<div class="t" style="left:52px;top:139px;color:#f0f0f0">Maquettes</div>
<svg style="left:219px;top:140px" width="11" height="13" viewBox="0 0 11 13"><path d="M0.6 0.6 H10.4 V12.4 H0.6 Z M2.5 0.6 V4 H5 M2.5 8 H8.5 M2.5 10.3 H8.5" fill="none" stroke="#a8a8aa" stroke-width="1.1"/><path d="M4.2 1.2 L7.2 2.5 L4.2 3.8 Z" fill="#a8a8aa"/></svg>
<svg style="left:236px;top:140px" width="12" height="13" viewBox="0 0 12 13"><path d="M0.6 3 H8.4 V12.4 H0.6 Z M3 3 V0.6 H11.4 V10 H8.4 M2.2 6 H6.8 M2.2 8.2 H6.8 M2.2 10.4 H6.8" fill="none" stroke="#68686a" stroke-width="1.1"/></svg>
<svg style="left:255px;top:140px" width="11" height="13" viewBox="0 0 11 13"><path d="M0.5 2.5 H10.5 M3.5 2.5 V0.7 H7.5 V2.5 M1.5 2.5 V12.3 H9.5 V2.5 M4 4.6 V10.4 M7 4.6 V10.4" fill="none" stroke="#68686a" stroke-width="1.1"/></svg>
<!-- master thumb A -->
<div class="thumb" style="left:62px;top:166px"><i class="r1"></i><i class="r2"></i><i class="sp"></i><i class="p1"></i><i class="p2"></i></div>
<div class="t b" style="left:147px;top:312px;font-size:10.5px;color:#e8e8e8">A</div>
<!-- Pages header -->
<div class="sec" style="left:35px;top:483px;width:234px;height:19px"></div>
<div class="chev" style="left:37.5px;top:488.5px;width:4px;height:4px;border-color:#c0c0c0"></div>
<div class="t" style="left:52px;top:485px;color:#f0f0f0">Pages</div>
<svg style="left:170px;top:485px" width="15" height="14" viewBox="0 0 15 14"><path d="M7.5 0.8 L14.4 13.2 H0.6 Z" fill="#e8b84a"/><path d="M7.5 4.6 V9" stroke="#3a2a08" stroke-width="1.7"/><circle cx="7.5" cy="11.2" r="0.95" fill="#3a2a08"/></svg>
<svg style="left:194px;top:486px" width="14" height="13" viewBox="0 0 14 13"><path d="M0 1 H14 M3 3.5 H11 M3 5.8 H11 M3 8.1 H11 M3 10.4 H11 M0 12.4 H3 M11 12.4 H14" stroke="#d8d8d8" stroke-width="1.2"/><path d="M7 1 V12" stroke="#d8d8d8" stroke-width="1.6"/></svg>
<svg style="left:219px;top:486px" width="11" height="13" viewBox="0 0 11 13"><path d="M0.6 0.6 H7 L10.4 4 V12.4 H0.6 Z M7 0.6 V4 H10.4" fill="none" stroke="#c8c8c8" stroke-width="1.1"/></svg>
<svg style="left:236px;top:485px" width="13" height="14" viewBox="0 0 13 14"><path d="M0.6 3.4 H8.4 V13.4 H0.6 Z M3.4 3.4 V0.6 H12.4 V10.6 H8.4" fill="none" stroke="#c8c8c8" stroke-width="1.1"/></svg>
<svg style="left:255px;top:486px" width="11" height="13" viewBox="0 0 11 13"><path d="M0.5 2.5 H10.5 M3.5 2.5 V0.7 H7.5 V2.5 M1.5 2.5 V12.3 H9.5 V2.5 M4 4.6 V10.4 M7 4.6 V10.4" fill="none" stroke="#c8c8c8" stroke-width="1.1"/></svg>
<!-- page thumbs -->
<div class="thumb" style="left:62px;top:513px"><i class="r1"></i><i class="r2"></i><i class="sp"></i><i class="p1"></i><i class="p2"></i></div>
<div class="t" style="left:101px;top:658px;width:100px;text-align:center;font-size:10.4px;color:#e8e8e8">Pages 1,2</div>
<div class="thumb" style="left:62px;top:690px"><i class="r1"></i><i class="r2"></i><i class="sp"></i><i class="p1"></i><i class="p2"></i></div>
<div class="t" style="left:101px;top:835px;width:100px;text-align:center;font-size:10.4px;color:#e8e8e8">Pages 3,4</div>
<div class="a" style="left:59px;top:864px;width:185px;height:137px;border:2.5px solid #8a8a8c;border-radius:3px"></div>
<div class="thumb" style="left:62px;top:867px"><i class="r1"></i><i class="r2"></i><i class="sp"></i><i class="p1"></i><i class="p2"></i></div>
<div class="t" style="left:101px;top:1012px;width:100px;text-align:center;font-size:10.4px;color:#e8e8e8">Pages 5,6</div>

<!--CANVAS_START-->
<!-- ===== DOCUMENT TABS ===== -->
<div class="a" style="left:272px;top:108px;width:1546px;height:26px;background:#2c2b2e"></div>
<div class="a" style="left:272px;top:108px;width:772px;height:26px;background:#1f1f21"></div>
<div class="a" style="left:1044px;top:108px;width:2px;height:26px;background:#1a1a1c"></div>
<div class="t" style="left:280px;top:115px;font-size:10px;color:#e4e4e4">&lt;Sans titre&gt; [Modifié] (25.2%)</div>
<svg style="left:1029px;top:117px" width="8" height="8"><path d="M1 1 L7 7 M7 1 L1 7" stroke="#e8e8e8" stroke-width="1.5" fill="none"/></svg>
<div class="t" style="left:1053px;top:115px;font-size:10px;color:#e4e4e4">&lt;Sans titre&gt; [Modifié] (20.1%)</div>
<svg style="left:1801px;top:117px" width="8" height="8"><path d="M1 1 L7 7 M7 1 L1 7" stroke="#e8e8e8" stroke-width="1.5" fill="none"/></svg>
<!-- ===== CANVAS ===== -->
<div class="a" id="canvas" style="left:272px;top:134px;width:1546px;height:1128px;background:#202020;overflow:hidden">
<svg style="left:0;top:0" width="1546" height="1128" viewBox="272 134 1546 1128">
<defs><g id="spread">
<rect x="-0.5" y="-0.5" width="460" height="336.5" fill="#f1f6fd"/>
<rect x="0" y="0" width="459" height="335.5" fill="none" stroke="#d6e2f4" stroke-width="1.2"/>
<rect x="4" y="26.2" width="69.4" height="255" fill="#ffffff" stroke="#86a4d6" stroke-width="0.9"/>
<rect x="80" y="26.2" width="69.5" height="255" fill="#ffffff" stroke="#86a4d6" stroke-width="0.9"/>
<rect x="156" y="26.2" width="69.6" height="255" fill="#ffffff" stroke="#86a4d6" stroke-width="0.9"/>
<rect x="4" y="26.2" width="221.6" height="255" fill="none" stroke="#6a8ccc" stroke-width="0.8"/>
<rect x="232.8" y="50.5" width="69.2" height="200.5" fill="#ffffff" stroke="#86a4d6" stroke-width="0.9"/>
<rect x="309" y="50.5" width="69.5" height="200.5" fill="#ffffff" stroke="#86a4d6" stroke-width="0.9"/>
<rect x="385" y="50.5" width="69.6" height="200.5" fill="#ffffff" stroke="#86a4d6" stroke-width="0.9"/>
<rect x="232.8" y="50.5" width="221.8" height="200.5" fill="none" stroke="#6a8ccc" stroke-width="0.8"/>
<g stroke="#2e2e30" stroke-width="0.9" fill="#ffffff"><rect x="3.5" y="292.2" width="222" height="39.6" stroke="#55585e"/><path d="M3.5 292.2 L225.5 331.8 M225.5 292.2 L3.5 331.8" fill="none"/>
<rect x="232.8" y="4.7" width="223" height="39.3" stroke="#55585e"/><path d="M232.8 4.7 L455.8 44 M455.8 4.7 L232.8 44" fill="none"/></g>
<path d="M229.5 0 V335.5" stroke="#b8c4d8" stroke-width="1"/>
<rect x="0" y="0" width="229.5" height="17.7" fill="#f52a04"/><rect x="0" y="0" width="229.5" height="17.7" fill="none" stroke="#d03030" stroke-width="1.4" opacity=".8"/>
<rect x="230" y="263.4" width="229.3" height="72.4" fill="#f52a04"/><rect x="230.6" y="264" width="228.2" height="71.4" fill="none" stroke="#d23434" stroke-width="1.6" opacity=".85"/>
</g></defs>
<use href="#spread" x="808" y="-60"/>
<use href="#spread" x="808" y="299"/>
<use href="#spread" x="808" y="658"/>
</svg>
<svg style="left:449px;top:166px" width="32" height="34" viewBox="0 0 32 34"><path d="M6.5 1 V4.5 M6.5 10 V13.5 M0.5 7.2 H4 M9 7.2 H12.5 M5 7.2 H8" stroke="#5a5a5a" stroke-width="1.2" fill="none"/><rect x="12" y="12.2" width="17" height="17.8" fill="#a4a4a4"/><rect x="13.3" y="13.4" width="14.2" height="15.2" fill="#303030"/><rect x="14.3" y="14.6" width="12.2" height="13" fill="#f2f2f2"/><path d="M16.6 17.6 V16.4 H24.2 V17.6 M20.4 16.4 V25.4" stroke="#222" stroke-width="1.7" fill="none"/></svg>
<div class="a" style="left:0;top:0;width:1534px;height:18px;background:#404042;overflow:hidden">
<div class="a" style="left:536px;top:0;width:460px;height:18px;background:#6c6c6e"></div>
<div class="a" style="left:-4.9px;top:0;width:1700px;height:18px;opacity:.75;background:repeating-linear-gradient(90deg,#d8d8d8 0,#d8d8d8 1px,transparent 1px,transparent 77.27px) 0 11.5px/100% 6.5px no-repeat,repeating-linear-gradient(90deg,#c0c0c0 0,#c0c0c0 1px,transparent 1px,transparent 38.635px) 0 14px/100% 4px no-repeat,repeating-linear-gradient(90deg,#b0b0b0 0,#b0b0b0 1px,transparent 1px,transparent 7.727px) 0 15.5px/100% 2.5px no-repeat,repeating-linear-gradient(90deg,#9a9a9a 0,#9a9a9a 1px,transparent 1px,transparent 3.8635px) 0 16.7px/100% 1.3px no-repeat"></div>
<div class="t" style="left:57.4px;top:1px;width:30px;text-align:center;font-size:8px;line-height:10px;height:10px;color:#9c9c9e;letter-spacing:-0.3px">-600</div>
<div class="t" style="left:134.6px;top:1px;width:30px;text-align:center;font-size:8px;line-height:10px;height:10px;color:#9c9c9e;letter-spacing:-0.3px">-500</div>
<div class="t" style="left:211.9px;top:1px;width:30px;text-align:center;font-size:8px;line-height:10px;height:10px;color:#9c9c9e;letter-spacing:-0.3px">-400</div>
<div class="t" style="left:289.2px;top:1px;width:30px;text-align:center;font-size:8px;line-height:10px;height:10px;color:#9c9c9e;letter-spacing:-0.3px">-300</div>
<div class="t" style="left:366.5px;top:1px;width:30px;text-align:center;font-size:8px;line-height:10px;height:10px;color:#9c9c9e;letter-spacing:-0.3px">-200</div>
<div class="t" style="left:443.7px;top:1px;width:30px;text-align:center;font-size:8px;line-height:10px;height:10px;color:#9c9c9e;letter-spacing:-0.3px">-100</div>
<div class="t" style="left:521.0px;top:1px;width:30px;text-align:center;font-size:8px;line-height:10px;height:10px;color:#9c9c9e;letter-spacing:-0.3px">0</div>
<div class="t" style="left:598.3px;top:1px;width:30px;text-align:center;font-size:8px;line-height:10px;height:10px;color:#9c9c9e;letter-spacing:-0.3px">100</div>
<div class="t" style="left:675.5px;top:1px;width:30px;text-align:center;font-size:8px;line-height:10px;height:10px;color:#9c9c9e;letter-spacing:-0.3px">200</div>
<div class="t" style="left:752.8px;top:1px;width:30px;text-align:center;font-size:8px;line-height:10px;height:10px;color:#9c9c9e;letter-spacing:-0.3px">300</div>
<div class="t" style="left:830.1px;top:1px;width:30px;text-align:center;font-size:8px;line-height:10px;height:10px;color:#9c9c9e;letter-spacing:-0.3px">400</div>
<div class="t" style="left:907.3px;top:1px;width:30px;text-align:center;font-size:8px;line-height:10px;height:10px;color:#9c9c9e;letter-spacing:-0.3px">500</div>
<div class="t" style="left:984.6px;top:1px;width:30px;text-align:center;font-size:8px;line-height:10px;height:10px;color:#9c9c9e;letter-spacing:-0.3px">600</div>
<div class="t" style="left:1061.9px;top:1px;width:30px;text-align:center;font-size:8px;line-height:10px;height:10px;color:#9c9c9e;letter-spacing:-0.3px">700</div>
<div class="t" style="left:1139.2px;top:1px;width:30px;text-align:center;font-size:8px;line-height:10px;height:10px;color:#9c9c9e;letter-spacing:-0.3px">800</div>
<div class="t" style="left:1216.4px;top:1px;width:30px;text-align:center;font-size:8px;line-height:10px;height:10px;color:#9c9c9e;letter-spacing:-0.3px">900</div>
<div class="t" style="left:1293.7px;top:1px;width:30px;text-align:center;font-size:8px;line-height:10px;height:10px;color:#9c9c9e;letter-spacing:-0.3px">1000</div>
<div class="t" style="left:1371.0px;top:1px;width:30px;text-align:center;font-size:8px;line-height:10px;height:10px;color:#9c9c9e;letter-spacing:-0.3px">1100</div>
<div class="t" style="left:1448.2px;top:1px;width:30px;text-align:center;font-size:8px;line-height:10px;height:10px;color:#9c9c9e;letter-spacing:-0.3px">1200</div>
<div class="a" style="left:436px;top:0;width:1.5px;height:18px;background:#3f78b8"></div>
</div>
<div class="a" style="left:0;top:18px;width:19px;height:1097px;background:#404042;overflow:hidden">
<div class="a" style="left:0;top:-52.3px;width:19px;height:1300px;opacity:.75;background:repeating-linear-gradient(180deg,#d8d8d8 0,#d8d8d8 1px,transparent 1px,transparent 79.76px) 12.5px 0/6.5px 100% no-repeat,repeating-linear-gradient(180deg,#c0c0c0 0,#c0c0c0 1px,transparent 1px,transparent 39.88px) 15px 0/4px 100% no-repeat,repeating-linear-gradient(180deg,#b0b0b0 0,#b0b0b0 1px,transparent 1px,transparent 7.976px) 16.5px 0/2.5px 100% no-repeat,repeating-linear-gradient(180deg,#9a9a9a 0,#9a9a9a 1px,transparent 1px,transparent 3.988px) 17.7px 0/1.3px 100% no-repeat"></div>
<div class="t" style="left:-10px;top:22.4px;width:30px;text-align:center;font-size:8px;line-height:10px;height:10px;color:#9c9c9e;letter-spacing:-0.3px;transform:rotate(-90deg)">-600</div>
<div class="t" style="left:-10px;top:102.2px;width:30px;text-align:center;font-size:8px;line-height:10px;height:10px;color:#9c9c9e;letter-spacing:-0.3px;transform:rotate(-90deg)">-500</div>
<div class="t" style="left:-10px;top:182.0px;width:30px;text-align:center;font-size:8px;line-height:10px;height:10px;color:#9c9c9e;letter-spacing:-0.3px;transform:rotate(-90deg)">-400</div>
<div class="t" style="left:-10px;top:261.7px;width:30px;text-align:center;font-size:8px;line-height:10px;height:10px;color:#9c9c9e;letter-spacing:-0.3px;transform:rotate(-90deg)">-300</div>
<div class="t" style="left:-10px;top:341.5px;width:30px;text-align:center;font-size:8px;line-height:10px;height:10px;color:#9c9c9e;letter-spacing:-0.3px;transform:rotate(-90deg)">-200</div>
<div class="t" style="left:-10px;top:421.2px;width:30px;text-align:center;font-size:8px;line-height:10px;height:10px;color:#9c9c9e;letter-spacing:-0.3px;transform:rotate(-90deg)">-100</div>
<div class="t" style="left:-10px;top:501.0px;width:30px;text-align:center;font-size:8px;line-height:10px;height:10px;color:#9c9c9e;letter-spacing:-0.3px;transform:rotate(-90deg)">0</div>
<div class="t" style="left:-10px;top:580.8px;width:30px;text-align:center;font-size:8px;line-height:10px;height:10px;color:#9c9c9e;letter-spacing:-0.3px;transform:rotate(-90deg)">100</div>
<div class="t" style="left:-10px;top:660.5px;width:30px;text-align:center;font-size:8px;line-height:10px;height:10px;color:#9c9c9e;letter-spacing:-0.3px;transform:rotate(-90deg)">200</div>
<div class="t" style="left:-10px;top:740.3px;width:30px;text-align:center;font-size:8px;line-height:10px;height:10px;color:#9c9c9e;letter-spacing:-0.3px;transform:rotate(-90deg)">300</div>
<div class="t" style="left:-10px;top:820.0px;width:30px;text-align:center;font-size:8px;line-height:10px;height:10px;color:#9c9c9e;letter-spacing:-0.3px;transform:rotate(-90deg)">400</div>
<div class="t" style="left:-10px;top:899.8px;width:30px;text-align:center;font-size:8px;line-height:10px;height:10px;color:#9c9c9e;letter-spacing:-0.3px;transform:rotate(-90deg)">500</div>
<div class="t" style="left:-10px;top:979.6px;width:30px;text-align:center;font-size:8px;line-height:10px;height:10px;color:#9c9c9e;letter-spacing:-0.3px;transform:rotate(-90deg)">600</div>
<div class="t" style="left:-10px;top:1059.3px;width:30px;text-align:center;font-size:8px;line-height:10px;height:10px;color:#9c9c9e;letter-spacing:-0.3px;transform:rotate(-90deg)">700</div>
<div class="a" style="left:0;top:137px;width:19px;height:1.5px;background:#3f78b8"></div>
</div>
<div class="a" style="left:0;top:0;width:19px;height:18px;background:#454547"></div>
<div class="t" style="left:2px;top:5px;font-size:8px;line-height:10px;height:10px;color:#8a8a8c">mm</div>
<div class="a" style="left:1534px;top:0;width:12px;height:1128px;background:#202020"></div>
<svg style="left:1535px;top:3px" width="9" height="8"><path d="M4.5 1 L8.5 7.5 H0.5 Z" fill="#8a8a8c"/></svg>
<svg style="left:1535px;top:1101px" width="9" height="8"><path d="M4.5 7 L8.5 0.5 H0.5 Z" fill="#8a8a8c"/></svg>
<div class="a" style="left:1537px;top:506px;width:5px;height:314px;background:#8c8c8c;border-radius:2.5px"></div>
<div class="a" style="left:500px;top:1118px;width:537px;height:5px;background:#a8a8aa;border-radius:3px"></div>
</div>
<!--CANVAS_END-->
<!-- ===== LAYERS PANEL ===== -->
<div class="a" style="left:1818px;top:108px;width:240px;height:1154px;background:#1d1d1f"></div>
<div class="a" style="left:1819.5px;top:108px;width:1.5px;height:1154px;background:#101011"></div>
<div class="hdr" style="left:1821px;top:108px;width:235px;height:27px"></div>
<div class="grip" style="left:1826px;top:112px"></div>
<div class="pill" style="left:1836px;top:112px;width:45px;height:18px"></div>
<div class="t" style="left:1841px;top:115px;font-size:9.6px;color:#f0f0f0">Calques</div>
<div class="cbox" style="left:2036px;top:114px"></div>
<div class="body" style="left:1821px;top:136px;width:234px;height:29px"></div>
<div class="t" style="left:1831px;top:144px;font-size:9.2px;color:#5c5c5e">Opacité:</div>
<div class="t" style="left:1875px;top:144px;font-size:10px;color:#8c8c8e">100 %</div>
<div class="chev" style="left:1909px;top:146px;width:4.5px;height:4.5px;border-color:#707072"></div>
<div class="t" style="left:1928px;top:144px;font-size:10.5px;color:#6c6c6e">Normal</div>
<div class="chev" style="left:2000px;top:146px;width:4.5px;height:4.5px;border-color:#5c5c5e"></div>
<svg style="left:2015px;top:145px" width="11" height="11" viewBox="0 0 11 11"><circle cx="5.5" cy="5.5" r="3" fill="none" stroke="#d4d4d4" stroke-width="2"/><path d="M5.5 0 V11 M0 5.5 H11 M1.6 1.6 L9.4 9.4 M9.4 1.6 L1.6 9.4" stroke="#d4d4d4" stroke-width="1.5"/><circle cx="5.5" cy="5.5" r="1.4" fill="#343336"/></svg>
<svg style="left:2036px;top:144px" width="9" height="12" viewBox="0 0 9 12"><rect x="0.5" y="5" width="8" height="6.5" fill="#e0e0e0"/><path d="M2.3 5 V3 A2.2 2.2 0 0 1 6.7 3 V5" fill="none" stroke="#e0e0e0" stroke-width="1.3"/></svg>
<!-- layer row -->
<div class="a" style="left:1821px;top:167px;width:234px;height:40px;background:#353537"></div>
<div class="a" style="left:1838px;top:167px;width:38px;height:40px;background:#2c2c30"></div>
<div class="a" style="left:1836px;top:167px;width:1.6px;height:40px;background:#5fb896"></div>
<div class="a" style="left:1839px;top:173px;width:17px;height:1.5px;background:#a03038"></div>
<div class="a" style="left:1856px;top:195px;width:20px;height:8px;background:#f52a08;border-radius:1px"></div>
<svg style="left:1824px;top:177px" width="7" height="22" viewBox="0 0 7 22"><path d="M0.5 0.5 H6.5 V8.5 H0.5 Z M0.5 4.5 H6.5 M3.5 0.5 V8.5" fill="none" stroke="#7a7a7c" stroke-width="1"/><path d="M1.2 13 L5.5 16 L1.2 19" fill="none" stroke="#7a7a7c" stroke-width="1.2"/></svg>
<div class="t" style="left:1879px;top:181px;color:#8a8a8c">A</div>
<div class="a" style="left:2022px;top:167px;width:2px;height:40px;background:#222224"></div>
<svg style="left:2032px;top:182px" width="15" height="11" viewBox="0 0 15 11"><path d="M0.5 5.5 C3 1 12 1 14.5 5.5 C12 10 3 10 0.5 5.5 Z" fill="#f0f0f0"/><circle cx="7.5" cy="5.5" r="2.3" fill="#353537"/></svg>
<!-- layers bottom bar -->
<div class="body" style="left:1821px;top:1233px;width:234px;height:27px"></div>
<svg style="left:1828px;top:1239px" width="14" height="14" viewBox="0 0 14 14"><path d="M7 2 H1 V13 H12 V7" fill="none" stroke="#d0d0d0" stroke-width="1.2"/><path d="M5 9 L6 6 L11.5 0.8 L13.2 2.5 L8 8 Z" fill="none" stroke="#d0d0d0" stroke-width="1.1"/></svg>
<svg style="left:1879px;top:1240px" width="12" height="12" viewBox="0 0 12 12"><rect x="0.5" y="0.5" width="11" height="11" fill="#e0e0e0"/><path d="M2 9.5 V3 H5 M2 6 H4.5 M6 4.5 L10 9.5 M10 4.5 L6 9.5" stroke="#343336" stroke-width="1.1" fill="none"/></svg>
<svg style="left:1897px;top:1240px" width="12" height="12" viewBox="0 0 12 12"><rect x="0.5" y="0.5" width="11" height="11" fill="#e8e8e8"/><circle cx="6" cy="6" r="3.2" fill="#343336"/></svg>
<svg style="left:1915px;top:1240px" width="11" height="12" viewBox="0 0 11 12"><path d="M0.5 0.5 H10.5 V2.5 C7 4 7 8 10.5 9.5 V11.5 H0.5 V9.5 C4 8 4 4 0.5 2.5 Z" fill="#e8e8e8"/></svg>
<svg style="left:1932px;top:1239px" width="14" height="14" viewBox="0 0 14 14"><circle cx="7" cy="7" r="6" fill="none" stroke="#e0e0e0" stroke-width="1.3"/><path d="M2.8 11.2 A6 6 0 0 0 11.2 2.8 Z" fill="#e0e0e0"/></svg>
<svg style="left:1979px;top:1239px" width="14" height="14" viewBox="0 0 14 14"><rect x="0.6" y="0.6" width="12.8" height="12.8" fill="none" stroke="#d8d8d8" stroke-width="1.2"/><circle cx="5.5" cy="5.5" r="2.8" fill="#d8d8d8"/><rect x="6" y="6.5" width="5.5" height="5" fill="#a8a8a8" stroke="#d8d8d8" stroke-width="0.8"/></svg>
<svg style="left:1997px;top:1240px" width="14" height="12" viewBox="0 0 14 12"><path d="M0.6 11.4 V0.6 H5.5 L7 2.6 H13.4 V11.4 Z" fill="none" stroke="#c8c8c8" stroke-width="1.2"/></svg>
<div class="a" style="left:2015px;top:1240px;width:12px;height:12px;background:conic-gradient(#e0e0e0 25%,#343336 0 50%,#e0e0e0 0 75%,#343336 0) 0 0/4px 4px"></div>
<svg style="left:2035px;top:1239px" width="10" height="13" viewBox="0 0 10 13"><path d="M0.5 2.5 H9.5 M3 2.5 V0.7 H7 V2.5 M1.3 2.5 V12.3 H8.7 V2.5 M3.7 4.6 V10.4 M6.3 4.6 V10.4" fill="none" stroke="#d0d0d0" stroke-width="1.1"/></svg>

<!-- ===== RIGHT PANEL ===== -->
<div class="a" style="left:2056px;top:108px;width:228px;height:1154px;background:#1d1d1f"></div>
<!-- colour panel -->
<div class="hdr" style="left:2058px;top:108px;width:226px;height:27px"></div>
<div class="body" style="left:2058px;top:135px;width:226px;height:217px"></div>
<div class="grip" style="left:2063px;top:112px"></div>
<div class="pill" style="left:2074px;top:112px;width:43px;height:18px"></div>
<div class="t" style="left:2078px;top:115px;font-size:9.6px;color:#f0f0f0">Couleur</div>
<div class="t" style="left:2121px;top:115px;font-size:9.6px;color:#b0b0b2">Échantillons</div>
<div class="t" style="left:2182px;top:115px;font-size:9.6px;color:#b0b0b2">Trait</div>
<div class="cbox" style="left:2278px;top:114px"></div>
<!-- fill/stroke selector -->
<div class="a" style="left:2082px;top:164px;width:22px;height:22px;border-radius:50%;background:#030303"></div>
<div class="a" style="left:2071px;top:152px;width:22px;height:23px;border-radius:50%;border:3.5px solid #f6f6f6;background:#2e2e30"></div>
<div class="a" style="left:2071px;top:174px;width:11px;height:12px;border-radius:50%;background:#e8c4d0;overflow:hidden"><div class="a" style="left:-2px;top:5px;width:16px;height:1.5px;background:#b05070;transform:rotate(-45deg)"></div></div>
<svg style="left:2093px;top:150px" width="12" height="14" viewBox="0 0 12 14"><path d="M1.5 3 C5 1 9 4 9.5 10" fill="none" stroke="#5a5a5c" stroke-width="1.1"/><path d="M0.5 5 L1.5 2 L4.2 3.5 M7.5 8 L9.5 11 L11.3 8" fill="none" stroke="#5a5a5c" stroke-width="1"/></svg>
<svg style="left:2112px;top:149px" width="18" height="19" viewBox="0 0 18 19"><path d="M1.2 17.6 L2 14.5 L9 7.5 L11.5 10 L4.5 17 Z" fill="none" stroke="#c8c8c8" stroke-width="1.3" stroke-linejoin="round"/><path d="M8 6 L13 11" stroke="#c8c8c8" stroke-width="1.6"/><path d="M10.5 6.2 L13.2 3.2 C14.4 2 16.6 4.2 15.4 5.4 L12.6 8.2 Z" fill="#c8c8c8"/></svg>
<div class="a" style="left:2131px;top:151px;width:13px;height:13px;border-radius:50%;background:#f42408"></div>
<!-- recent swatches -->
<div class="a" style="left:2260px;top:162px;width:12px;height:13px;background:#040404"></div>
<div class="a" style="left:2272px;top:162px;width:12px;height:13px;background:#fbfbfb"></div>
<div class="a" style="left:2260px;top:175px;width:12px;height:13px;background:#f22a0a"></div>
<div class="a" style="left:2272px;top:175px;width:12px;height:13px;background:#dcdcdc"></div>
<!-- hue wheel -->
<div class="a" style="left:2109.8px;top:168.5px;width:133.4px;height:138.6px;border-radius:50%;background:conic-gradient(from 90deg,#ff2020,#ff9000 8%,#ffff00 17%,#40ff00 30%,#00ff60 40%,#00e8ff 50%,#2060ff 60%,#3030ff 66%,#b030ff 75%,#ff30e0 85%,#ff2080 93%,#ff2020);-webkit-mask:radial-gradient(closest-side,transparent 78.5%,#000 80.5%,#000 99%,transparent 100%);mask:radial-gradient(closest-side,transparent 78.5%,#000 80.5%,#000 99%,transparent 100%)"></div>
<svg style="left:2140px;top:185px" width="100" height="105" viewBox="2140 185 100 105">
<defs>
<linearGradient id="gw" gradientUnits="userSpaceOnUse" x1="2150" y1="284.6" x2="2189.2" y2="215.1"><stop offset="0" stop-color="#fff" stop-opacity="1"/><stop offset=".45" stop-color="#fff" stop-opacity=".42"/><stop offset="1" stop-color="#fff" stop-opacity="0"/></linearGradient>
<linearGradient id="gb" gradientUnits="userSpaceOnUse" x1="2150" y1="193" x2="2190.7" y2="259.7"><stop offset="0" stop-color="#100" stop-opacity="1"/><stop offset=".4" stop-color="#200" stop-opacity=".38"/><stop offset="1" stop-color="#200" stop-opacity="0"/></linearGradient>
</defs>
<path d="M2150 193 L2228 237 L2150 284.6 Z" fill="#ee2616"/>
<path d="M2150 193 L2228 237 L2150 284.6 Z" fill="url(#gw)"/>
<path d="M2150 193 L2228 237 L2150 284.6 Z" fill="url(#gb)"/>
<circle cx="2149.4" cy="189" r="4.2" fill="#050510" stroke="#f4f4f4" stroke-width="1.6"/>
<circle cx="2236" cy="237" r="4.2" fill="#f03020" stroke="#ffd8d0" stroke-width="1.4"/>
</svg>
<div class="t" style="left:2067px;top:276px;font-size:9px;color:#6c6c6e">T: 0</div>
<div class="t" style="left:2067px;top:288px;font-size:9px;color:#6c6c6e">S: 0</div>
<div class="t" style="left:2068px;top:300px;font-size:9px;color:#6c6c6e">I: 0</div>
<div class="t" style="left:2232px;top:296px;font-size:9px;color:#8a8a8c">#:</div>
<div class="fld" style="left:2241px;top:294px;width:43px;height:16px;background:#252427"></div>
<div class="t" style="left:2242px;top:296px;font-size:9.5px;color:#e0e0e0">000000</div>
<div class="t" style="left:2072px;top:317px;font-size:9.5px;color:#9a9a9c">Opacité</div>
<div class="a" style="left:2076px;top:332px;width:12px;height:13px;border-radius:50%;background:#030303"></div>
<div class="a" style="left:2097px;top:336px;width:116px;height:8px;border-radius:4px;background:linear-gradient(90deg,#e8e8e8,#9a9a9a 50%,#404042)"></div>
<div class="a" style="left:2210px;top:335.5px;width:10.5px;height:10.5px;border-radius:50%;border:1.5px solid #e8e8e8;background:#343336"></div>
<div class="fld" style="left:2228px;top:330px;width:36px;height:17px;background:#2a292c"></div>
<div class="t" style="left:2232px;top:332px;font-size:10px;color:#e0e0e0">100 %</div>
<div class="dd" style="left:2266px;top:330px;width:13px;height:17px"></div><div class="chev" style="left:2269.5px;top:334px;border-color:#8a8a8c"></div>
<!-- character panel -->
<div class="hdr" style="left:2058px;top:354px;width:226px;height:27px"></div>
<div class="body" style="left:2058px;top:381px;width:226px;height:728.5px"></div>
<div class="grip" style="left:2063px;top:358px"></div>
<div class="pill" style="left:2074px;top:358px;width:49px;height:18px"></div>
<div class="t" style="left:2078px;top:361px;font-size:9.6px;color:#f0f0f0">Caractère</div>
<div class="t" style="left:2128px;top:361px;font-size:9.6px;color:#b0b0b2">Paragraphe</div>
<div class="cbox" style="left:2278px;top:360px"></div>
<div class="dd" style="left:2064px;top:388px;width:62px;height:17px"></div>
<div class="t" style="left:2067px;top:390px;font-size:10px;color:#e0e0e0">Tout</div><div class="chev" style="left:2117px;top:392px"></div>
<div class="fld" style="left:2134px;top:388px;width:142px;height:17px"></div>
<div class="t" style="left:2138px;top:390px;color:#e8e8e8">Arial</div>
<div class="dd" style="left:2277px;top:388px;width:13px;height:17px"></div><div class="chev" style="left:2280px;top:392px"></div>
<div class="fld" style="left:2064px;top:412px;width:50px;height:17px"></div>
<div class="t" style="left:2068px;top:414px;font-size:10.5px;color:#e8e8e8">12 pt</div>
<div class="dd" style="left:2114px;top:412px;width:13px;height:17px"></div><div class="chev" style="left:2117.5px;top:416px"></div>
<div class="dd" style="left:2134px;top:412px;width:63px;height:17px"></div>
<div class="t" style="left:2138px;top:414px;font-size:10px;color:#e0e0e0">Regular</div><div class="chev" style="left:2188px;top:416px"></div>
<div class="a" style="left:2204px;top:412px;width:24px;height:17px;background:#3d3d3f;border-radius:2px"></div>
<div class="t" style="left:2210px;top:412px;font-size:11px;color:#6a6a6c">tV</div><div class="a" style="left:2210px;top:425px;width:11px;height:1px;background:#58585a"></div>
<div class="a" style="left:2233px;top:411px;width:25px;height:19px;background:#030303;border-radius:1px"></div>
<div class="sw" style="left:2264px;top:411px;width:26px;height:19px"></div>
<div class="dd" style="left:2064px;top:436px;width:226px;height:17px"></div>
<div class="t" style="left:2067px;top:438px;font-size:10px;color:#d8d8d8">[Aucun style]</div><div class="chev" style="left:2279px;top:440px"></div>
<!-- Décorations -->
<div class="a" style="left:2058px;top:459px;width:226px;height:19px;background:#29282b"></div>
<div class="chev" style="left:2061px;top:464px;width:4px;height:4px;border-color:#c0c0c0"></div>
<div class="t" style="left:2073px;top:461px;color:#f0f0f0">Décorations</div>
<div class="a" style="left:2064px;top:483px;width:25px;height:19px;background:#1e1e20;border-radius:3px;border:1px solid #3e3e40"></div>
<div class="t" style="left:2072px;top:484px;font-size:12px;color:#e8e8e8">U</div>
<div class="t" style="left:2098px;top:484px;font-size:12px;color:#d0d0d0;text-decoration:underline">U</div>
<div class="t" style="left:2125px;top:484px;font-size:12px;color:#d0d0d0;text-decoration:underline;text-decoration-style:double">U</div>
<div class="sw" style="left:2148px;top:483px;width:26px;height:19px"></div>
<div class="a" style="left:2180px;top:483px;width:25px;height:19px;background:#1e1e20;border-radius:3px;border:1px solid #3e3e40"></div>
<div class="t" style="left:2188px;top:485px;font-size:12px;color:#e8e8e8">S</div>
<div class="t" style="left:2215px;top:485px;font-size:12px;color:#c8c8c8;text-decoration:line-through">S</div>
<div class="t" style="left:2242px;top:485px;font-size:12px;color:#c8c8c8;text-decoration:line-through;text-decoration-style:double">S</div>
<div class="sw" style="left:2264px;top:483px;width:26px;height:19px"></div>
<div class="dd" style="left:2063px;top:508px;width:195px;height:18px;background:#444446"></div>
<div class="a" style="left:2070px;top:516.5px;width:146px;height:1.5px;background:#6a6a6c"></div>
<div class="t" style="left:2221px;top:510px;color:#e0e0e0">Aucun</div>
<div class="sw" style="left:2264px;top:508px;width:26px;height:18px"></div>
<div class="a" style="left:2132px;top:513px;width:24px;height:3px;background:#b03838;transform:rotate(-52deg);opacity:.85;border-radius:2px"></div>
<!-- Position -->
<div class="a" style="left:2058px;top:532px;width:226px;height:37px;background:#29282b"></div>
<div class="chevr" style="left:2059px;top:538px;width:4px;height:4px;border-color:#c0c0c0"></div>
<div class="t" style="left:2073px;top:534px;color:#f0f0f0">Position et Transformer</div>
<div class="chev" style="left:2061px;top:554.5px;width:4px;height:4px;border-color:#c0c0c0"></div>
<div class="t" style="left:2073px;top:553px;color:#f0f0f0">Langue</div>
<div class="t" style="left:2068px;top:576px;width:101px;text-align:right;font-size:10px;color:#868688">Orthographe</div>
<div class="dd" style="left:2175px;top:575px;width:115px;height:16px"></div><div class="t" style="left:2179px;top:576.5px;font-size:9.5px;color:#e8e8e8">Français (France)</div><div class="chev" style="left:2279px;top:578px"></div>
<div class="t" style="left:2068px;top:600px;width:101px;text-align:right;font-size:10px;color:#868688">Césure</div>
<div class="dd" style="left:2175px;top:599px;width:115px;height:16px"></div><div class="t" style="left:2179px;top:600.5px;font-size:10px;color:#e8e8e8">Auto</div><div class="chev" style="left:2279px;top:602px"></div>
<div class="t" style="left:2068px;top:624px;width:101px;text-align:right;font-size:10px;color:#868688">Script de typographie</div>
<div class="dd" style="left:2175px;top:623px;width:115px;height:16px"></div><div class="t" style="left:2179px;top:624.5px;font-size:10px;color:#e8e8e8">Auto</div><div class="chev" style="left:2279px;top:626px"></div>
<div class="t" style="left:2068px;top:648px;width:101px;text-align:right;font-size:10px;color:#868688">Langue de typographie</div>
<div class="dd" style="left:2175px;top:647px;width:115px;height:16px"></div><div class="t" style="left:2179px;top:648.5px;font-size:10px;color:#e8e8e8">Auto</div><div class="chev" style="left:2279px;top:650px"></div>
<div class="a" style="left:2058px;top:670px;width:226px;height:37px;background:#29282b"></div>
<div class="chevr" style="left:2059px;top:676px;width:4px;height:4px;border-color:#c0c0c0"></div>
<div class="t" style="left:2073px;top:673px;color:#f0f0f0">Alignement visuel</div>
<div class="chev" style="left:2061px;top:692.5px;width:4px;height:4px;border-color:#c0c0c0"></div>
<div class="t" style="left:2073px;top:691px;color:#f0f0f0">Typographie</div>
<!-- typography icons -->
<div class="a" style="left:2063.5px;top:712px;width:19.5px;height:19px;background:#1c1c1e;border-radius:3px;border:1px solid #444446"></div>
<div class="t" style="left:2069px;top:714px;font-family:'Liberation Serif',serif;font-size:13px;color:#f0f0f0">fi</div>
<div class="t" style="left:2087px;top:714px;font-family:'Liberation Serif',serif;font-style:italic;font-size:13px;color:#d8d8d8">a.</div>
<div class="t" style="left:2107px;top:714px;font-family:'Liberation Serif',serif;font-size:13px;color:#d8d8d8">1<span style="font-size:7px;position:relative;top:-5px">st</span></div>
<div class="t" style="left:2126px;top:714px;font-size:11px;color:#d0d0d0">½</div>
<div class="t b" style="left:2146px;top:714px;font-size:12px;color:#d8d8d8">S</div><div class="a" style="left:2155px;top:715px;width:2px;height:2px;background:#d8d8d8"></div>
<div class="t b" style="left:2166px;top:714px;font-size:12px;color:#d8d8d8">S</div><div class="a" style="left:2175px;top:724px;width:2px;height:2px;background:#d8d8d8"></div>
<div class="t b" style="left:2184px;top:714px;font-family:'Liberation Serif',serif;font-size:12px;color:#e0e0e0;letter-spacing:-1px">TT</div>
<div class="t b" style="left:2204px;top:714px;font-family:'Liberation Serif',serif;font-size:12px;color:#e0e0e0;letter-spacing:-0.5px">T<span style="font-size:8px">T</span></div>
<div class="t" style="left:2071px;top:739px;font-family:'Liberation Serif',serif;font-size:12px;color:#48484a">ƒi</div>
<div class="a" style="left:2090px;top:739px;width:12px;height:14px;background:#d0d0d0;border-radius:1px"></div>
<div class="t b" style="left:2093px;top:739px;font-family:'Liberation Serif',serif;font-size:12px;color:#343336">f</div>
<div class="a" style="left:2090px;top:754px;width:12px;height:1px;background:#8a8a8c"></div>
<div class="t" style="left:2112px;top:739px;font-size:11px;color:#444446">()</div>
<div class="dd" style="left:2128px;top:737px;width:20px;height:17px"></div>
<div class="t" style="left:2133px;top:738px;font-size:10px;color:#e0e0e0">...</div>
<!-- transform panel -->
<div class="hdr" style="left:2058px;top:1111px;width:226px;height:28px"></div>
<div class="body" style="left:2058px;top:1139px;width:226px;height:121px"></div>
<div class="grip" style="left:2063px;top:1116px"></div>
<div class="pill" style="left:2074px;top:1116px;width:59px;height:18px"></div>
<div class="t" style="left:2078px;top:1119px;font-size:9.6px;color:#f0f0f0">Transformer</div>
<div class="t" style="left:2139px;top:1119px;font-size:9.6px;color:#b0b0b2">Navigateur</div>
<div class="t" style="left:2195px;top:1119px;font-size:9.6px;color:#b0b0b2">Historique</div>
<div class="cbox" style="left:2278px;top:1118px"></div>
<div class="a" style="left:2074px;top:1172px;width:29px;height:30px;background:#5e5e60"></div>
<div class="a" style="left:2072px;top:1170.5px;width:33px;height:33.5px;background:conic-gradient(#5e5e60 0 0) 0 0/4px 4px no-repeat,conic-gradient(#5e5e60 0 0) 14.5px 0/4px 4px no-repeat,conic-gradient(#5e5e60 0 0) 29px 0/4px 4px no-repeat,conic-gradient(#5e5e60 0 0) 0 14.7px/4px 4px no-repeat,conic-gradient(#5e5e60 0 0) 29px 14.7px/4px 4px no-repeat,conic-gradient(#5e5e60 0 0) 0 29.5px/4px 4px no-repeat,conic-gradient(#5e5e60 0 0) 14.5px 29.5px/4px 4px no-repeat,conic-gradient(#5e5e60 0 0) 29px 29.5px/4px 4px no-repeat"></div>
<div class="t" style="left:2120px;top:1153px;font-size:10px;color:#5e5e60">X:</div><div class="t" style="left:2137px;top:1153px;font-size:10px;color:#7a7a7c">0 mm</div>
<div class="t" style="left:2201px;top:1153px;font-size:10px;color:#5e5e60">L:</div><div class="t" style="left:2217px;top:1153px;font-size:10px;color:#7a7a7c">0 mm</div>
<div class="t" style="left:2120px;top:1175px;font-size:10px;color:#5e5e60">Y:</div><div class="t" style="left:2137px;top:1175px;font-size:10px;color:#7a7a7c">0 mm</div>
<div class="t" style="left:2200px;top:1175px;font-size:10px;color:#5e5e60">H:</div><div class="t" style="left:2217px;top:1175px;font-size:10px;color:#7a7a7c">0 mm</div>
<div class="t" style="left:2120px;top:1203px;font-size:10px;color:#5e5e60">R:</div><div class="t" style="left:2137px;top:1203px;font-size:10px;color:#7a7a7c">0 °</div>
<div class="chev" style="left:2180px;top:1205px;border-color:#6a6a6c"></div>
<div class="t" style="left:2202px;top:1203px;font-size:10px;color:#5e5e60">S:</div><div class="t" style="left:2217px;top:1203px;font-size:10px;color:#7a7a7c">0 °</div>
<div class="chev" style="left:2261px;top:1205px;border-color:#6a6a6c"></div>
<div class="a" style="left:2280px;top:1163px;width:6px;height:15px;border:1.2px solid #5a5a5c;border-radius:1px"></div>
<svg style="left:2234px;top:1231px" width="15" height="15" viewBox="0 0 15 15"><rect x="4.5" y="0.5" width="10" height="10" fill="none" stroke="#58585a" stroke-width="1"/><rect x="0.5" y="8.5" width="6" height="6" fill="#58585a"/></svg>
<div class="chev" style="left:2261px;top:1234px;border-color:#8a8a8c"></div>
<div class="a" style="left:2056px;top:1260px;width:228px;height:2px;background:#252427"></div>

<!-- ===== STATUS BAR ===== -->
<div class="a" style="left:0;top:1262px;width:2284px;height:16px;background:#3a3a3c"></div>
<svg style="left:5px;top:1269px" width="8" height="10" viewBox="0 0 8 10"><path d="M1 0 V10" stroke="#d8d8d8" stroke-width="1.4"/><path d="M8 0 L2.5 5 L8 10 Z" fill="#d8d8d8"/></svg>
<svg style="left:21px;top:1269px" width="7" height="10" viewBox="0 0 7 10"><path d="M7 0 L0.5 5 L7 10 Z" fill="#d8d8d8"/></svg>
<div class="t" style="left:49px;top:1268px;font-size:9.8px;color:#d8d8d8">5,6 sur 6</div>
<svg style="left:108px;top:1269px" width="7" height="10" viewBox="0 0 7 10"><path d="M0 0 L6.5 5 L0 10 Z" fill="#d8d8d8"/></svg>
<svg style="left:123px;top:1269px" width="8" height="10" viewBox="0 0 8 10"><path d="M7 0 V10" stroke="#707072" stroke-width="1.4"/><path d="M0 0 L5.5 5 L0 10 Z" fill="#707072"/></svg>
<svg style="left:139px;top:1267px" width="12" height="12" viewBox="0 0 12 12"><path d="M0.6 0.6 H9.4 V11.4 H0.6 Z M11.4 1 V11 M2 3 H8 M2 5.5 H8 M2 8 H8" fill="none" stroke="#c8c8c8" stroke-width="1.1"/></svg>
<svg style="left:158px;top:1267px" width="12" height="12" viewBox="0 0 12 12"><path d="M0.6 3 V0.6 H10 V3 M2.6 3 H11.4 V11.4 H2.6 Z M4.5 6 H9.5 M4.5 8.5 H9.5" fill="none" stroke="#c8c8c8" stroke-width="1.1"/></svg>
<div class="a" style="left:181px;top:1267px;width:11px;height:11px;border-radius:50%;background:#2fb35c"></div>
<svg style="left:183px;top:1270px" width="7" height="6" viewBox="0 0 7 6"><path d="M0.8 3 L2.8 5 L6.2 0.8" fill="none" stroke="#e8ffe8" stroke-width="1.3"/></svg>
<div class="a" style="left:194px;top:1267px;width:1px;height:11px;background:#9a9a9c"></div>
<div class="t" style="left:211px;top:1268px;font-size:10.8px;color:#8c8c8e"><b style="color:#f0f0f0;letter-spacing:-0.45px">Glisser</b> pour créer une zone de texte. <b style="color:#f0f0f0;letter-spacing:-0.45px">Cliquer</b> sur un objet pour le sélectionner.</div>

</body>
</html>
